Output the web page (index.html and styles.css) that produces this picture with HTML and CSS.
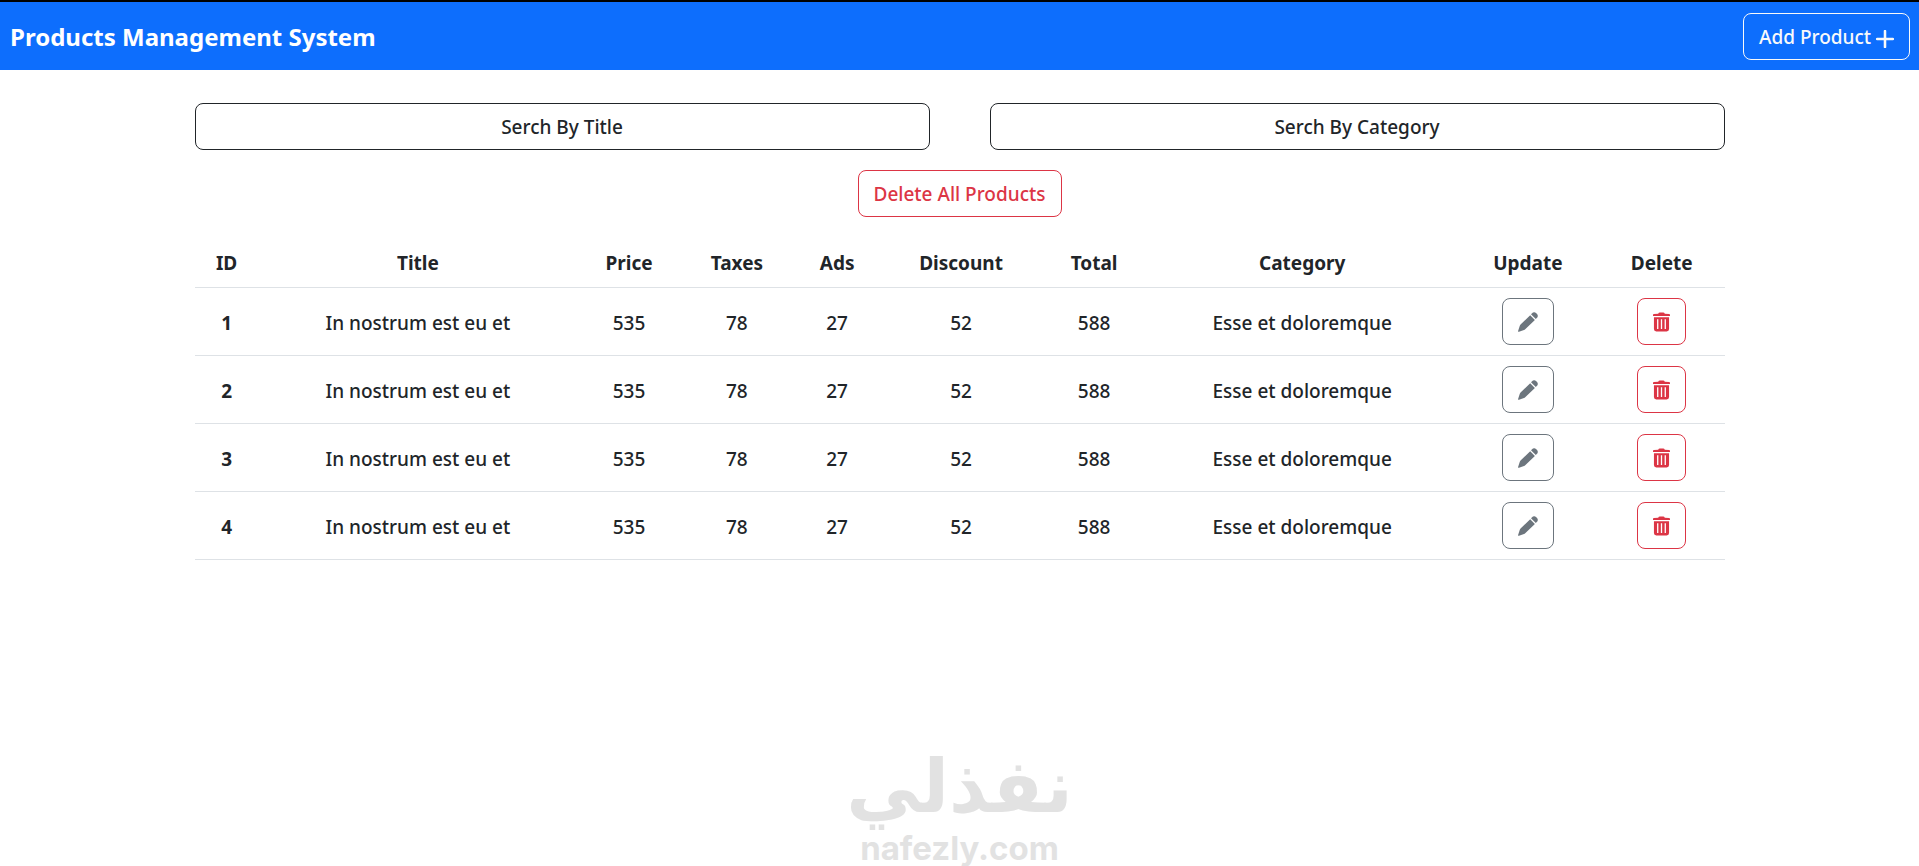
FILE: index.html
```html
<!DOCTYPE html>
<html lang="en">
<head>
    <meta charset="UTF-8">
    <meta name="viewport" content="width=device-width, initial-scale=1.0">
    <title>Products Management System</title>
    <link rel="stylesheet" href="styles.css">
</head>
<body>
    <!-- icons used by the buttons -->
    <svg class="sprite" aria-hidden="true">
        <symbol id="icon-plus" viewBox="0 0 17 17">
            <path d="M8.500 1v15M1 8.500h15" fill="none" stroke="currentColor" stroke-width="2.400" stroke-linecap="round"/>
        </symbol>
        <symbol id="icon-pencil" viewBox="0 0 20 20">
            <path d="M13.800 1.600Q16 -.9 18.300 1.300L18.800 1.800Q21 4 18.500 6.300L17.800 7 13 2.300z"/>
            <path d="M12.200 3.200L16.900 7.900 7.200 17.200Q6.700 17.700 6 18L1 19.800Q-.2 20 .1 18.900L1.800 13.800Q2.100 12.900 2.800 12.300z"/>
        </symbol>
        <symbol id="icon-trash" viewBox="0 0 18 20">
            <path d="M5.500 1.200Q6 0 7.200 0h3.600Q12 0 12.500 1.200L17 1.600Q18 1.700 18 2.600V3.600H0V2.600Q0 1.700 1 1.600z"/>
            <path fill-rule="evenodd" d="M1 5h16v12.500Q17 20 14.500 20h-11Q1 20 1 17.500zM4.300 7v10.500h1.400v-10.500zM8.300 7v10.500h1.400v-10.500zM12.300 7v10.500h1.400v-10.500z"/>
        </symbol>
    </svg>

    <header class="navbar">
        <h1 class="brand">Products Management System</h1>
        <button type="button" class="btn btn-light">Add Product <svg class="icon-plus"><use href="#icon-plus"/></svg></button>
    </header>

    <main class="container">
        <div class="search-row">
            <button type="button" class="btn btn-dark">Serch By Title</button>
            <button type="button" class="btn btn-dark">Serch By Category</button>
        </div>
        <button type="button" class="btn btn-danger delete-all">Delete All Products</button>

        <table class="products">
            <thead>
                <tr>
                    <th class="col-id">ID</th>
                    <th class="col-title">Title</th>
                    <th class="col-price">Price</th>
                    <th class="col-taxes">Taxes</th>
                    <th class="col-ads">Ads</th>
                    <th class="col-discount">Discount</th>
                    <th class="col-total">Total</th>
                    <th class="col-category">Category</th>
                    <th class="col-update">Update</th>
                    <th class="col-delete">Delete</th>
                </tr>
            </thead>
            <tbody>
                <tr>
                    <th>1</th>
                    <td>In nostrum est eu et</td>
                    <td>535</td>
                    <td>78</td>
                    <td>27</td>
                    <td>52</td>
                    <td>588</td>
                    <td>Esse et doloremque</td>
                    <td class="action"><button type="button" class="btn btn-secondary" aria-label="Update"><svg class="icon-pencil"><use href="#icon-pencil"/></svg></button></td>
                    <td class="action"><button type="button" class="btn btn-danger" aria-label="Delete"><svg class="icon-trash"><use href="#icon-trash"/></svg></button></td>
                </tr>
                <tr>
                    <th>2</th>
                    <td>In nostrum est eu et</td>
                    <td>535</td>
                    <td>78</td>
                    <td>27</td>
                    <td>52</td>
                    <td>588</td>
                    <td>Esse et doloremque</td>
                    <td class="action"><button type="button" class="btn btn-secondary" aria-label="Update"><svg class="icon-pencil"><use href="#icon-pencil"/></svg></button></td>
                    <td class="action"><button type="button" class="btn btn-danger" aria-label="Delete"><svg class="icon-trash"><use href="#icon-trash"/></svg></button></td>
                </tr>
                <tr>
                    <th>3</th>
                    <td>In nostrum est eu et</td>
                    <td>535</td>
                    <td>78</td>
                    <td>27</td>
                    <td>52</td>
                    <td>588</td>
                    <td>Esse et doloremque</td>
                    <td class="action"><button type="button" class="btn btn-secondary" aria-label="Update"><svg class="icon-pencil"><use href="#icon-pencil"/></svg></button></td>
                    <td class="action"><button type="button" class="btn btn-danger" aria-label="Delete"><svg class="icon-trash"><use href="#icon-trash"/></svg></button></td>
                </tr>
                <tr>
                    <th>4</th>
                    <td>In nostrum est eu et</td>
                    <td>535</td>
                    <td>78</td>
                    <td>27</td>
                    <td>52</td>
                    <td>588</td>
                    <td>Esse et doloremque</td>
                    <td class="action"><button type="button" class="btn btn-secondary" aria-label="Update"><svg class="icon-pencil"><use href="#icon-pencil"/></svg></button></td>
                    <td class="action"><button type="button" class="btn btn-danger" aria-label="Delete"><svg class="icon-trash"><use href="#icon-trash"/></svg></button></td>
                </tr>
            </tbody>
        </table>
    </main>

    <footer class="watermark">
        <span class="watermark-ar" lang="ar" dir="rtl">نفذلي</span>
        <span class="watermark-en">nafezly.com</span>
    </footer>
</body>
</html>
```
FILE: styles.css
```css
* {
    box-sizing: border-box;
}

body {
    margin: 0;
    min-height: 100vh;
    display: flex;
    flex-direction: column;
    font-family: "Noto Sans", "Open Sans", sans-serif;
    font-size: 19px;
    font-weight: 500;
    line-height: 30px;
    color: #212529;
    background-color: #fff;
}

.sprite {
    display: none;
}

.navbar {
    display: flex;
    justify-content: space-between;
    align-items: center;
    padding: 11px 9px 10px 10px;
    border-top: 2px solid #000;
    background-color: #0d6efd;
    color: #fff;
}

.brand {
    margin: 0;
    font-size: 24px;
    font-weight: 700;
}

.btn {
    padding: 9px 15px 7px;
    border: 1px solid currentColor;
    border-radius: 8px;
    background-color: transparent;
    font: inherit;
    line-height: 29px;
    cursor: pointer;
}

.btn svg {
    fill: currentColor;
    vertical-align: middle;
}

.btn-light {
    color: #f8f9fa;
}

.btn-dark {
    color: #212529;
}

.btn-danger {
    color: #dc3545;
}

.btn-secondary {
    color: #6c757d;
}

.icon-plus {
    width: 18px;
    height: 18px;
}

.icon-pencil {
    width: 20px;
    height: 20px;
}

.icon-trash {
    width: 17px;
    height: 20px;
}

.container {
    width: 80%;
    max-width: 1530px;
    margin: 33px auto 0;
    display: flex;
    flex-direction: column;
    gap: 20px;
}

.search-row {
    display: grid;
    grid-template-columns: 1fr 1fr;
    gap: 60px;
}

.delete-all {
    align-self: center;
}

.products {
    width: 100%;
    table-layout: fixed;
    border-collapse: collapse;
    text-align: center;
}

.products th,
.products td {
    padding: 11px 0 9px;
    border-bottom: 1px solid #dee2e6;
    vertical-align: middle;
}

.products th {
    font-weight: 700;
}

.products .action {
    padding: 10px 0;
}

.products .btn {
    display: flex;
    align-items: center;
    height: 47px;
    margin: 0 auto;
    padding: 0 15px;
}

.col-id { width: 4.2%; }
.col-title { width: 20.8%; }
.col-price { width: 6.8%; }
.col-taxes { width: 7.3%; }
.col-ads { width: 5.8%; }
.col-discount { width: 10.4%; }
.col-total { width: 7%; }
.col-category { width: 20.2%; }
.col-update { width: 9.3%; }
.col-delete { width: 8.2%; }

.watermark {
    margin-top: auto;
    display: flex;
    flex-direction: column;
    align-items: center;
    color: #e2e2e2;
    font-weight: 700;
}

.watermark-ar {
    font-family: "DejaVu Sans", sans-serif;
    font-size: 74px;
    line-height: 88px;
}

.watermark-en {
    font-family: Inter, sans-serif;
    font-size: 33px;
    line-height: 36px;
}
```
